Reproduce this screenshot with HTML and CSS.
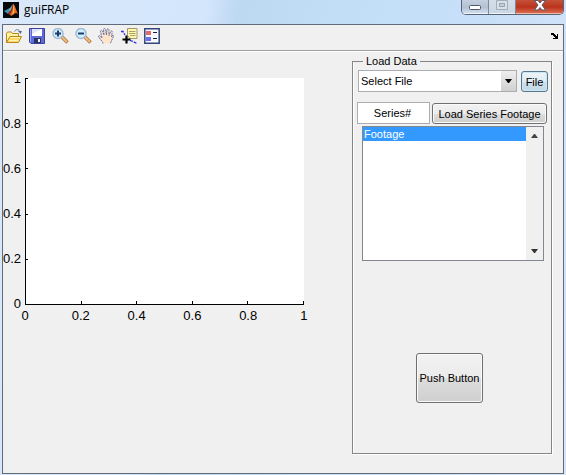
FILE: index.html
```html
<!DOCTYPE html>
<html lang="en">
<head>
<meta charset="utf-8">
<title>guiFRAP</title>
<link rel="stylesheet" href="styles.css">
</head>
<body>
<div class="window">
  <header class="titlebar">
    <svg class="app-icon" width="16" height="16" viewBox="0 0 16 16" aria-hidden="true">
      <rect width="16" height="16" fill="#05070a"/>
      <path d="M1 9l4-2 2 2-2 3z" fill="#3d8fb5"/>
      <path d="M5 7l2-1 3-4-1 5-2 3z" fill="#67b4bd"/>
      <path d="M5 12l2-3c2-2 2-6 3.500-7.500L9.500 9 7 13z" fill="#a52c12"/>
      <path d="M10.500 1.500C12 4 13.500 9 15 12c-2-2-3-1-4.500.5L8 14l-1-2c2-1 3-6 3.500-10.500z" fill="#e56a22"/>
      <path d="M10.500 2c1 2 1 6 .5 9l-2 2c1-3 1-6 1.500-11z" fill="#f6b252"/>
    </svg>
    <h1 class="title">guiFRAP</h1>
    <div class="caption-buttons">
      <button class="caption minimize" aria-label="Minimize">
        <svg width="14" height="7" viewBox="0 0 14 7"><rect x="1.500" y="1.500" width="11" height="4" rx="1" fill="#fff" stroke="#525766"/></svg>
      </button>
      <button class="caption maximize" aria-label="Maximize" disabled>
        <svg width="12" height="10" viewBox="0 0 12 10"><path d="M.5.5h11v9H.5z" fill="#d7dfe7" stroke="#a1adb9"/><path d="M3.500 3.500h5v3h-5z" fill="#c2cfdb" stroke="#95a2af"/></svg>
      </button>
      <button class="caption close" aria-label="Close">
        <svg width="12" height="11" viewBox="0 0 12 11"><path d="M.5.5h3.500L6 3 8 .5h3.500L8 5l3.500 5H8L6 7.500 4 10H.5L4 5z" fill="#fff" stroke="#56596c"/></svg>
      </button>
    </div>
  </header>
  <div class="client">
    <div class="toolbar" role="toolbar" aria-label="Figure">
      <button class="tool" aria-label="Open file">
        <svg width="16" height="16" viewBox="0 0 16 16">
          <path d="M8.500 3.500C10 1 13 1 14 3.500" fill="none" stroke="#5a7da8"/><path d="M12 3h4l-1.500 3z" fill="#4e719c"/>
          <path d="M.5 14.500v-9l1-1.500h4l1 1.500h6v3" fill="#fff3a8" stroke="#b98619"/>
          <path d="M.5 14.500L4 8.500h11.500l-3 6z" fill="#ffd968" stroke="#b98619"/>
          <path d="M4.500 9.500h9.500M3 12.500h9.500" stroke="#fff4b5"/>
        </svg>
      </button>
      <button class="tool" aria-label="Save figure">
        <svg width="16" height="16" viewBox="0 0 16 16">
          <path d="M1 .5h14.500v15H2l-1.500-1.500V.5z" fill="#5f69d8" stroke="#3a439c"/>
          <path d="M3 1h10v7H3z" fill="#dbe4fa"/><path d="M3 6l10-5v7H3z" fill="#fff"/>
          <path d="M1.500 1v13" stroke="#9aa4f2"/><path d="M5 10h7v5H5z" fill="#2a3268"/><path d="M9 11h2v3H9z" fill="#f4f6ff"/>
        </svg>
      </button>
      <button class="tool" aria-label="Zoom in">
        <svg width="17" height="16" viewBox="0 0 17 16">
          <path d="M10 9l5.500 5.500" stroke="#a87740" stroke-width="3.500"/><path d="M10 9l5 5" stroke="#f5bd7a" stroke-width="2"/>
          <circle cx="6" cy="5.500" r="5" fill="#cdf1fb" stroke="#a3b9d8" stroke-width="1.500"/><path d="M3 5.500h6M6 2.500v6" stroke="#1f3c6d" stroke-width="2"/>
        </svg>
      </button>
      <button class="tool" aria-label="Zoom out">
        <svg width="17" height="16" viewBox="0 0 17 16">
          <path d="M10 9l5.500 5.500" stroke="#a87740" stroke-width="3.500"/><path d="M10 9l5 5" stroke="#f5bd7a" stroke-width="2"/>
          <circle cx="6" cy="5.500" r="5" fill="#cdf1fb" stroke="#a3b9d8" stroke-width="1.500"/><path d="M3 5.500h6" stroke="#1f3c6d" stroke-width="2"/>
        </svg>
      </button>
      <button class="tool" aria-label="Pan">
        <svg width="16" height="16" viewBox="0 0 16 16">
          <path d="M5 15.500c0-2-4-5-4.500-7.500 1-1 2.500.5 3.500 2L2.500 3.500c0-1.500 1.500-1.500 2 0L6 7 5.500 1.500c0-1.300 1.800-1.300 2 0L8.500 7 9 1.500c.2-1.300 2-1 2 .5L11 7.500l1.500-4c.6-1.200 2-.5 1.700.8L13.500 9l1-1.500c.7-.7 1.500 0 1 1C14.500 11 13 13 12.500 15.500" fill="#ffe4cc" stroke="#56649a" stroke-width=".9" stroke-dasharray="2 .7"/>
        </svg>
      </button>
      <button class="tool" aria-label="Data cursor">
        <svg width="17" height="16" viewBox="0 0 17 16">
          <path d="M6.500.5h9.500v10h-7l-2.500-3z" fill="#fff7ac" stroke="#a3986a"/><path d="M8 3.500h6.500M8 5.500h6.500M9 7.500h5.500" stroke="#aaa071"/>
          <path d="M0 3.500h2l2 3.500M9 12.500l3 1 4 2" fill="none" stroke="#2a2bec" stroke-width="1.300" stroke-dasharray="3 1"/>
          <path d="M5.500 7.500v8M1.500 11.500h8" stroke="#000" stroke-width="2.200"/>
        </svg>
      </button>
      <button class="tool" aria-label="Insert legend">
        <svg width="16" height="16" viewBox="0 0 16 16">
          <path d="M.8.8h14.400v14.400H.8z" fill="#f6f9ff" stroke="#33457c" stroke-width="1.500"/>
          <path d="M2 3h5v4H2z" fill="#e2686a"/><path d="M2 9h5v4H2z" fill="#696ee8"/>
          <path d="M9 4.500h4M9 10.500h4" stroke="#1b1e38"/>
        </svg>
      </button>
      <button class="tool dock" aria-label="Dock figure">
        <svg width="8" height="6" viewBox="0 0 8 6"><path d="M0 0h3v1h1v1h1v1h1V1h1v5H2V5h2V4H3V3H2V2H0z" fill="#000"/></svg>
      </button>
    </div>
    <main class="figure">
      <section class="axes" aria-label="Axes">
        <div class="y-labels"><span>1</span><span>0.8</span><span>0.6</span><span>0.4</span><span>0.2</span><span>0</span></div>
        <div class="plot">
          <div class="y-ticks"><i></i><i></i><i></i><i></i><i></i><i></i></div>
          <div class="x-ticks"><i></i><i></i><i></i><i></i><i></i><i></i></div>
        </div>
        <div class="x-labels"><span>0</span><span>0.2</span><span>0.4</span><span>0.6</span><span>0.8</span><span>1</span></div>
      </section>
      <fieldset class="panel">
        <legend>Load Data</legend>
        <div class="row file-row">
          <div class="combo">
            <select aria-label="Select file"><option>Select File</option></select>
            <span class="combo-arrow"><svg width="7" height="4" viewBox="0 0 7 4"><path d="M0 0h7L4 4H3z"/></svg></span>
          </div>
          <button class="push file">File</button>
        </div>
        <div class="row series-row">
          <input class="series" type="text" value="Series#" aria-label="Series number">
          <button class="push load">Load Series Footage</button>
        </div>
        <div class="listbox">
          <select size="6" aria-label="Footage"><option class="current">Footage</option></select>
          <div class="scrollbar" aria-hidden="true">
            <svg width="7" height="4" viewBox="0 0 7 4"><path d="M0 4h7L4 0H3z" fill="#444"/></svg>
            <svg width="7" height="4" viewBox="0 0 7 4"><path d="M0 0h7L4 4H3z" fill="#333"/></svg>
          </div>
        </div>
        <button class="push big">Push Button</button>
      </fieldset>
    </main>
  </div>
</div>
</body>
</html>
```
FILE: styles.css
```css
* { box-sizing: border-box; }

body {
  margin: 0;
  font: 11px/14px "Liberation Sans", Arial, sans-serif;
  color: #000;
}

button, input, select { font: inherit; color: inherit; margin: 0; }

.window {
  display: flex;
  flex-direction: column;
  min-height: 100vh;
  padding: 0 2px 2px;
  background: linear-gradient(100deg, #d9e8fa 0, #d3e6fc 32%, #bdd8f1 37%, #c4dff8 60%, #c8dff8 75%, #d5e5f8 100%);
}

.titlebar {
  display: flex;
  align-items: flex-start;
  height: 24px;
  padding-left: 1px;
}

.app-icon { margin-top: 2px; }

.title {
  margin: 0 0 0 5px;
  font: 12px/20px "Open Sans", "Noto Sans", sans-serif;
}

.caption-buttons {
  display: flex;
  height: 15px;
  margin-left: auto;
  border: 1px solid #56637a;
  border-top: 0;
  border-radius: 0 0 5px 5px;
  overflow: hidden;
}

.caption {
  display: flex;
  justify-content: center;
  width: 27px;
  padding: 0;
  border: 0;
  border-right: 1px solid #7f8b9c;
  background: linear-gradient(#c5d0df, #b2c1d2 50%, #d4e1ef);
  box-shadow: inset 0 -1px #eef5fc;
}

.minimize { padding-top: 4px; }
.maximize { background: linear-gradient(#d5dfe9, #c9d5e1); }
.close {
  width: 47px;
  border-right: 0;
  background: linear-gradient(#c4523a, #bb321a 50%, #dd7458);
  box-shadow: inset 0 -1px #f4b8a5;
}

.client {
  display: flex;
  flex: 1;
  flex-direction: column;
  border: 1px solid #626b7a;
  background: #f0f0f0;
}

.toolbar {
  display: flex;
  align-items: center;
  gap: 7px;
  height: 27px;
  padding: 0 4px 4px 3px;
  border-bottom: 1px solid #fff;
  box-shadow: inset 0 -1px #a0a0a0;
}

.tool {
  display: flex;
  align-items: center;
  justify-content: center;
  width: 16px;
  height: 16px;
  padding: 0;
  border: 0;
  background: none;
}

.tool svg { flex: none; }
.dock { width: 8px; margin-left: auto; }

.figure {
  display: flex;
  flex: 1;
  gap: 48px;
  padding: 0 11px 19px 0;
}

.axes {
  display: grid;
  flex: 1;
  grid-template: 227px 20px / 22px 1fr;
  align-content: start;
  padding-top: 26px;
  font-size: 13px;
  line-height: 16px;
}

.y-labels {
  display: flex;
  flex-direction: column;
  justify-content: space-between;
  align-items: flex-end;
  margin: -7px 4px -7px 0;
}

.plot {
  display: grid;
  border: solid #000;
  border-width: 0 0 1px 1px;
  background: #fff;
}

.y-ticks, .x-ticks {
  display: flex;
  grid-area: 1 / 1;
  justify-content: space-between;
}

.y-ticks { flex-direction: column; width: 2px; margin-bottom: -1px; }
.y-ticks i { height: 1px; background: #000; }
.x-ticks { align-self: end; height: 3px; margin-left: -1px; }
.x-ticks i { width: 1px; background: #000; }

.x-labels {
  display: flex;
  grid-column: 2;
  justify-content: space-between;
  margin: 3px -14px 0;
}

.x-labels span { width: 28px; text-align: center; }

.panel {
  display: flex;
  flex-direction: column;
  width: 200px;
  min-width: 0;
  margin: 2px 0 0;
  padding: 2px 4px 50px 4px;
  border: 1px solid #858585;
  box-shadow: 1px 1px #fff, inset 1px 0 #fff;
}

.panel legend { margin-left: 6px; padding: 0 3px; line-height: 14px; }

.row { display: flex; }

.file-row { gap: 4px; margin-right: -1px; padding-left: 1px; }

.combo {
  display: flex;
  flex: 1;
  height: 22px;
  border: 1px solid #abadb3;
  background: #fff;
}

.combo select {
  flex: 1;
  min-width: 0;
  padding: 0 2px;
  border: 0;
  appearance: none;
  background: none;
}

.combo-arrow {
  display: grid;
  place-items: center;
  width: 15px;
  background: linear-gradient(#eee, #d0d0d0);
}

.push {
  padding: 0;
  border: 1px solid #707070;
  border-radius: 3px;
  background: linear-gradient(#f2f2f2, #ebebeb 50%, #ddd 50%, #cfcfcf);
  box-shadow: inset 0 0 0 1px #fafafa;
}

.file {
  width: 27px;
  height: 21px;
  margin: 1px 0 0;
  border-color: #58788f;
  background: linear-gradient(#eef4f8, #dfebf3 50%, #cedfea 50%, #c5d8e5);
  box-shadow: inset 0 0 0 1px #c9e8f6;
}

.series-row { gap: 2px; margin-top: 10px; }

.series {
  width: 73px;
  height: 22px;
  padding: 0 2px 0 0;
  border: 1px solid #abadb3;
  background: #fff;
  text-align: center;
}

.load { flex: 1; height: 21px; margin: 1px 0 0; }

.listbox {
  display: flex;
  height: 135px;
  margin: 2px 3px 0 5px;
  border: 1px solid #828790;
  background: #fff;
}

.listbox select {
  flex: 1;
  min-width: 0;
  padding: 0;
  border: 0;
  border-radius: 0;
  background: #fff;
  overflow: hidden;
  outline: 0;
}

.listbox option { height: 14px; min-height: 14px; padding: 1px 1px 0; line-height: 14px; }
.listbox .current { background: #3399ff; color: #fff; }

.scrollbar {
  display: flex;
  flex-direction: column;
  justify-content: space-between;
  align-items: center;
  width: 17px;
  padding: 7px 0;
  background: #f0f0f0;
}

.big {
  width: 67px;
  height: 50px;
  margin: 92px 0 0 59px;
}
```
